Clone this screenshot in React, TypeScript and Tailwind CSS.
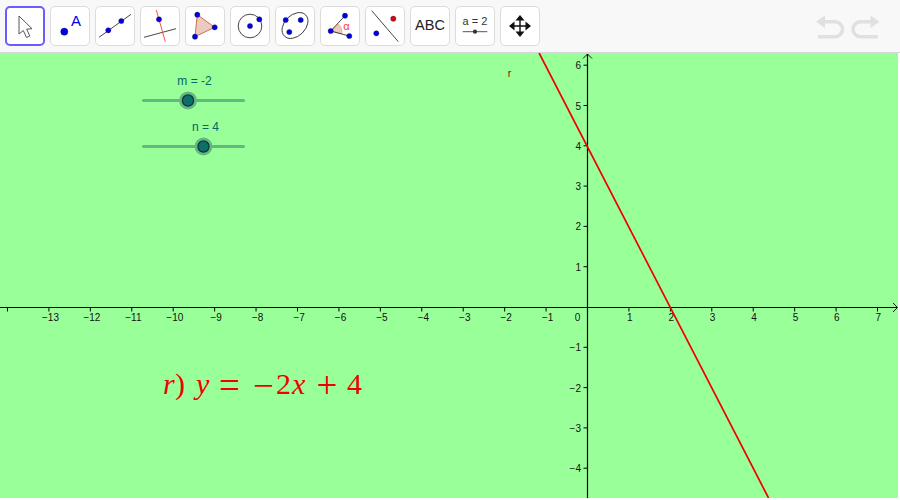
const BLUE = '#0000e6'
const X0 = 587.5
const Y0 = 307
const UX = 41.43
const UY = 40.3

const xTicks = [-14, -13, -12, -11, -10, -9, -8, -7, -6, -5, -4, -3, -2, -1, 1, 2, 3, 4, 5, 6, 7]
const yTicks = [6, 5, 4, 3, 2, 1, -1, -2, -3, -4]

function Dot({ x, y, r = 2.6, fill = BLUE }: { x: number; y: number; r?: number; fill?: string }) {
  return <circle cx={x} cy={y} r={r} fill={fill} stroke="#1a1a4a" strokeWidth="0.4" />
}

function ToolButton({ active, children }: { active?: boolean; children: React.ReactNode }) {
  return (
    <div
      className={
        active
          ? 'w-10 h-10 shrink-0 rounded-[5px] bg-white border-2 border-[#6a5cff]'
          : 'w-10 h-10 shrink-0 rounded-[5px] bg-white border border-[#dcdcdc]'
      }
    >
      {children}
    </div>
  )
}

function Icon({ children, inset }: { children: React.ReactNode; inset?: number }) {
  const o = inset ?? 1
  return (
    <svg width="38" height="38" viewBox={`${o} ${o} 38 38`} className="block">
      {children}
    </svg>
  )
}

function Toolbar() {
  return (
    <div className="h-[53px] flex items-start justify-between pt-[6px] pl-[5px] bg-[#f8f8f8] border-b border-[#d6d6d6]">
      <div className="flex gap-[5px]">
        <ToolButton active>
          <Icon inset={2}>
            <path
              d="M14 10 L14 28 L18.3 24.5 L21.5 31.5 L24.8 30 L21.7 23.2 L27 22.7 Z"
              fill="#fff"
              stroke="#444"
              strokeWidth="0.9"
              strokeLinejoin="round"
            />
          </Icon>
        </ToolButton>
        <ToolButton>
          <Icon>
            <Dot x={14.3} y={25.7} r={3.6} />
            <text x={26} y={20} textAnchor="middle" fontSize="15" fill={BLUE} className="font-['Liberation_Sans']">
              A
            </text>
          </Icon>
        </ToolButton>
        <ToolButton>
          <Icon>
            <line x1="4" y1="31.3" x2="36" y2="8.3" stroke="#333" strokeWidth="0.9" />
            <Dot x={13.3} y={24.3} />
            <Dot x={26.3} y={15} />
          </Icon>
        </ToolButton>
        <ToolButton>
          <Icon>
            <line x1="4" y1="31.3" x2="36" y2="22.7" stroke="#333" strokeWidth="0.9" />
            <line x1="16.3" y1="4" x2="25.3" y2="35.7" stroke="#f04040" strokeWidth="0.9" />
            <Dot x={19} y={13.3} />
          </Icon>
        </ToolButton>
        <ToolButton>
          <Icon>
            <polygon
              points="12.3,8.7 29.7,21.3 10,30.7"
              fill="#eccabf"
              stroke="#c9714a"
              strokeWidth="1"
            />
            <Dot x={12.3} y={8.7} />
            <Dot x={29.7} y={21.3} />
            <Dot x={10} y={30.7} />
          </Icon>
        </ToolButton>
        <ToolButton>
          <Icon>
            <circle cx="20" cy="20" r="11.8" fill="none" stroke="#333" strokeWidth="0.9" />
            <Dot x={20} y={20} />
            <Dot x={29.3} y={13.3} />
          </Icon>
        </ToolButton>
        <ToolButton>
          <Icon>
            <ellipse
              cx="20"
              cy="19.5"
              rx="15"
              ry="10.5"
              transform="rotate(-45 20 19.5)"
              fill="none"
              stroke="#333"
              strokeWidth="0.9"
            />
            <Dot x={10.7} y={14} />
            <Dot x={25.7} y={14} />
            <Dot x={14.3} y={26} />
          </Icon>
        </ToolButton>
        <ToolButton>
          <Icon>
            <path d="M10.7 25 L18.3 18 A10 10 0 0 1 21.5 28 Z" fill="#eccabf" stroke="#e08a80" strokeWidth="0.6" />
            <line x1="10.7" y1="25" x2="25" y2="9.7" stroke="#333" strokeWidth="0.9" />
            <line x1="10.7" y1="25" x2="29.3" y2="30" stroke="#333" strokeWidth="0.9" />
            <Dot x={10.7} y={25} />
            <Dot x={25} y={9.7} />
            <Dot x={29.3} y={30} />
            <text x={26.5} y={23.5} textAnchor="middle" fontSize="11" fill="#ee4444" className="font-['Liberation_Sans']">
              α
            </text>
          </Icon>
        </ToolButton>
        <ToolButton>
          <Icon>
            <line x1="6.7" y1="4.7" x2="33.3" y2="35.7" stroke="#333" strokeWidth="0.9" />
            <Dot x={28.3} y={12.7} fill="#e60000" />
            <Dot x={11.3} y={27.3} />
          </Icon>
        </ToolButton>
        <ToolButton>
          <div className="h-full flex items-center justify-center text-[14.5px] text-[#222] font-['Liberation_Sans']">
            ABC
          </div>
        </ToolButton>
        <ToolButton>
          <Icon>
            <text x={20} y={19} textAnchor="middle" fontSize="11" fill="#333" className="font-['Liberation_Sans']">
              a = 2
            </text>
            <line x1="7.7" y1="25.7" x2="32.3" y2="25.7" stroke="#555" strokeWidth="1" />
            <circle cx="20" cy="25.7" r="2.1" fill="#333" />
          </Icon>
        </ToolButton>
        <ToolButton>
          <Icon>
            <path
              d="M20 9 L24.5 14.5 H20.7 V19.3 H25.5 V15.5 L31 20 L25.5 24.5 V20.7 H20.7 V25.5 H24.5 L20 31 L15.5 25.5 H19.3 V20.7 H14.5 V24.5 L9 20 L14.5 15.5 V19.3 H19.3 V14.5 H15.5 Z"
              fill="#111"
            />
          </Icon>
        </ToolButton>
      </div>
      <div className="mr-[18px] mt-[8px]">
        <svg width="68" height="28" viewBox="814 14 68 28" className="block">
          <g fill="none" stroke="#e0e0e0" strokeWidth="3.5">
            <path d="M818 36.7 H835 A7.5 7.5 0 0 0 835 21.7 H822" />
            <path d="M877.7 36.7 H860.5 A7.5 7.5 0 0 1 860.5 21.7 H874" />
          </g>
          <polygon points="816,21.7 825,15.5 825,28" fill="#e0e0e0" />
          <polygon points="879.5,21.7 870.5,15.5 870.5,28" fill="#e0e0e0" />
        </svg>
      </div>
    </div>
  )
}

function Slider({ label, labelX, labelY, y, knob }: { label: string; labelX: number; labelY: number; y: number; knob: number }) {
  return (
    <g>
      <text x={labelX} y={labelY} textAnchor="middle" fontSize="12" fill="#006666">
        {label}
      </text>
      <line x1="143.5" y1={y} x2="243.5" y2={y} stroke="#62b980" strokeWidth="3" strokeLinecap="round" />
      <circle cx={knob} cy={y} r="9" fill="#62b980" />
      <circle cx={knob} cy={y} r="5.6" fill="#0d7068" stroke="#10303a" strokeWidth="1.2" />
    </g>
  )
}

function Graph() {
  return (
    <svg
      width="898"
      height="445"
      viewBox="0 53 898 445"
      className="block bg-[#99ff99] font-['Liberation_Sans']"
    >
      <line x1="0" y1="307.5" x2="897" y2="307.5" stroke="#000" strokeWidth="1.2" />
      <line x1={X0} y1="54" x2={X0} y2="498" stroke="#000" strokeWidth="1.2" />
      <path d="M893 303 L897.5 307.5 L893 312" fill="none" stroke="#000" strokeWidth="0.9" />
      <path d={`M${X0 - 4.5} 58.5 L${X0} 54 L${X0 + 4.5} 58.5`} fill="none" stroke="#000" strokeWidth="0.9" />

      {xTicks.map((n) => {
        const x = X0 + n * UX
        return (
          <g key={n}>
            <line x1={x} y1={Y0} x2={x} y2={Y0 + 4.5} stroke="#000" strokeWidth="1" />
            {n !== -14 && (
              <text x={x + (n < 0 ? 1.6 : 0.8)} y="321" textAnchor="middle" fontSize="10" fill="#111">
                {n < 0 ? `\u2212${-n}` : n}
              </text>
            )}
          </g>
        )
      })}
      {yTicks.map((n) => {
        const y = Y0 - n * UY
        return (
          <g key={n}>
            <line x1={X0 - 4} y1={y} x2={X0} y2={y} stroke="#000" strokeWidth="1" />
            <text x="581" y={y + 4} textAnchor="end" fontSize="10" fill="#111">
              {n < 0 ? `\u2212${-n}` : n}
            </text>
          </g>
        )
      })}
      <text x="577.5" y="321" textAnchor="middle" fontSize="10" fill="#111">
        0
      </text>

      <line x1={X0 - 1.168 * UX} y1="53" x2={X0 + 4.37 * UX} y2="498" stroke="#f00000" strokeWidth="1.7" />
      <text x="509.5" y="76.5" textAnchor="middle" fontSize="11" fill="#b00000">
        r
      </text>

      <Slider label="m = -2" labelX={194.5} labelY={85} y={100.5} knob={188} />
      <Slider label="n = 4" labelX={205.5} labelY={131} y={146.5} knob={203.5} />

      <g fill="#f00000" className="font-['Liberation_Serif']">
        <text y="394" fontSize="30">
          <tspan x="163" fontStyle="italic">r</tspan>
          <tspan x="175">)</tspan>
          <tspan x="196" fontStyle="italic">y</tspan>
          <tspan x="276">2</tspan>
          <tspan x="292" fontStyle="italic">x</tspan>
          <tspan x="347">4</tspan>
        </text>
        <text y="397.5" fontSize="37">
          <tspan x="219">=</tspan>
          <tspan x="253">{'\u2212'}</tspan>
          <tspan x="316.5">+</tspan>
        </text>
      </g>
    </svg>
  )
}

export default function App() {
  return (
    <div className="w-[900px] h-[500px] bg-white overflow-hidden">
      <Toolbar />
      <Graph />
    </div>
  )
}
